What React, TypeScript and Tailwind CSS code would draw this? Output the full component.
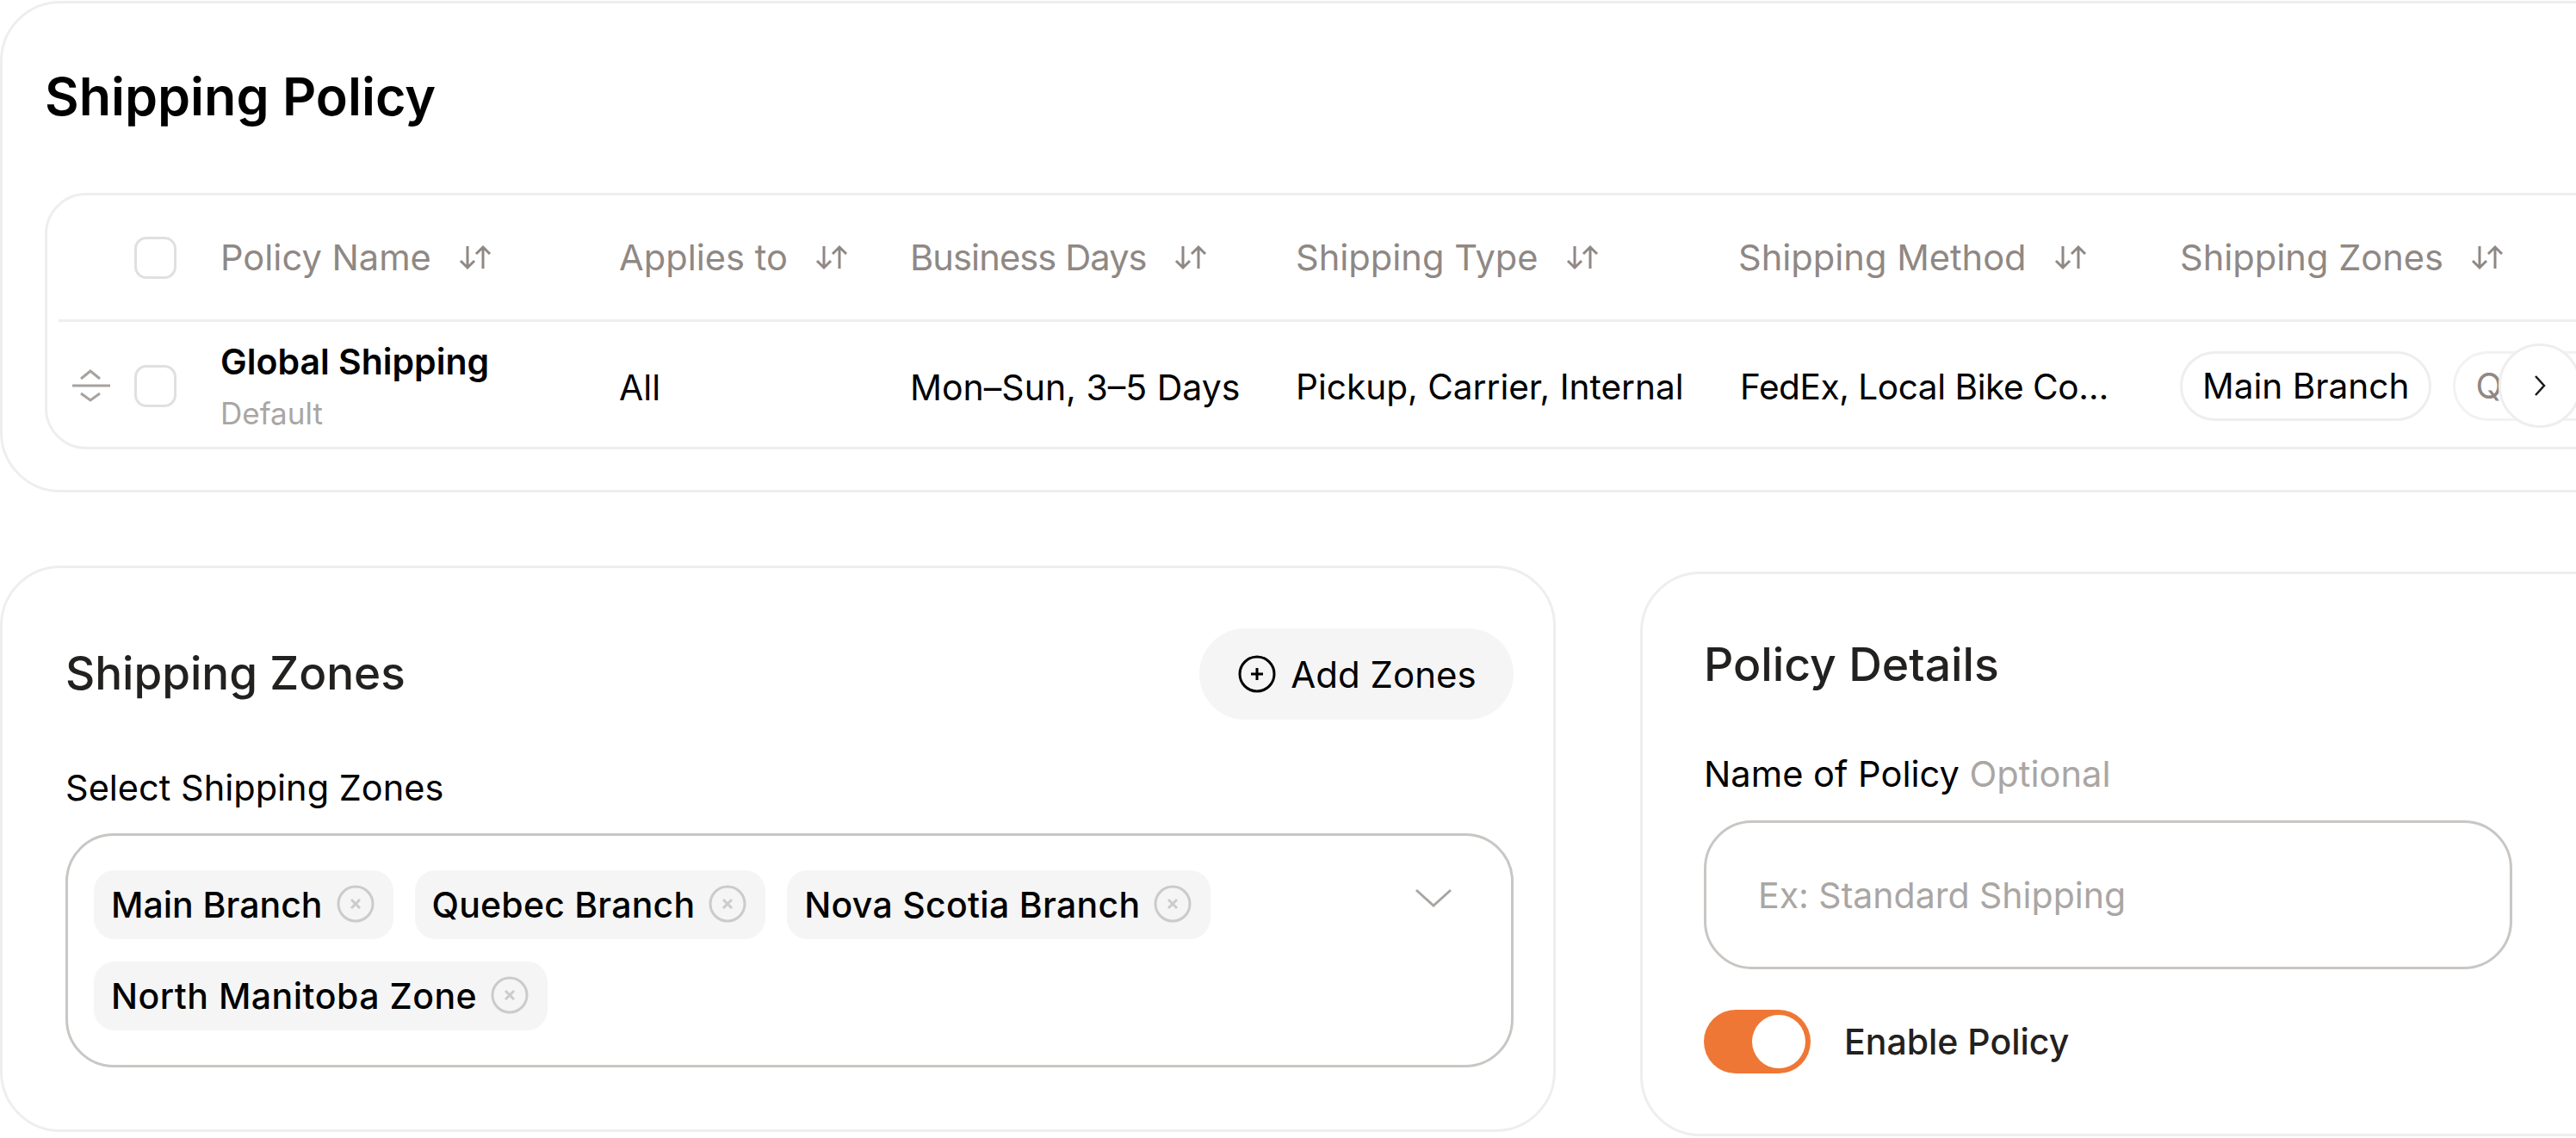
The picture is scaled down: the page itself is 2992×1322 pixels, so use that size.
const grid = "grid grid-cols-[101px_100px_463px_338px_448px_514px_513px_600px] items-center";

function Sort() {
  return (
    <svg width="38" height="30" viewBox="0 0 38 30" fill="none" stroke="#8f8884" strokeWidth="3" className="shrink-0">
      <path d="M10 2v25M2 19l8 8 8-8" />
      <path d="M28 28V3M20 11l8-8 8 8" />
    </svg>
  );
}

function Check() {
  return <div className="w-[49px] h-[49px] rounded-[14px] border-[3px] border-[#e1e0df] bg-white" />;
}

function Head({ label, extra }: { label: string; extra?: string }) {
  return (
    <div className="flex items-center gap-[32px] text-[41.6px] text-[#8f8884] whitespace-nowrap">
      <span className={extra}>{label}</span>
      <Sort />
    </div>
  );
}

function Chip({ label, extra }: { label: string; extra?: string }) {
  return (
    <div className="h-[80px] rounded-[24px] bg-[#f5f5f5] flex items-center pl-[20px] pr-[22px] gap-[16px] text-[41px] font-[550] text-black whitespace-nowrap">
      <span className={`pt-[2px] ${extra ?? ""}`}>{label}</span>
      <svg width="44" height="44" viewBox="0 0 44 44" fill="none" stroke="#cdcbc9" strokeWidth="3" className="shrink-0 -mt-[3px]">
        <circle cx="22" cy="22" r="20" />
        <path d="M17 17l10 10M27 17l-10 10" />
      </svg>
    </div>
  );
}

export default function App() {
  return (
    <div className="w-[2992px] h-[1322px] overflow-hidden bg-white font-[Inter,sans-serif]">
      <section className="w-[3200px] h-[571px] mt-[1px] border-[3px] border-[#eeeeee] rounded-[70px] pl-[49px] pt-[68px] relative">
        <h1 className="text-[61px] leading-[80px] font-semibold text-black">Shipping Policy</h1>
        <div className="w-[3100px] h-[298px] mt-[72px] border-[3px] border-[#eeeeee] rounded-[48px]">
          <div className={`${grid} h-[144px]`}>
            <div />
            <Check />
            <Head label="Policy Name" />
            <Head label="Applies to" />
            <Head label="Business Days" extra="tracking-[-0.9px]" />
            <Head label="Shipping Type" />
            <Head label="Shipping Method" />
            <Head label="Shipping Zones" />
          </div>
          <div className="ml-[13px] h-[3px] bg-[#eeeeee]" />
          <div className={`${grid} h-[148px] text-[41px] text-black whitespace-nowrap`}>
            <svg width="44" height="38" viewBox="0 0 44 38" fill="none" stroke="#a8a29e" strokeWidth="3" className="ml-[29px]">
              <path d="M10 11l11-9 11 9M0 19h44" />
              <path d="M10 28l11 8 11-8" />
            </svg>
            <Check />
            <div>
              <div className="text-[41px] leading-[50px] font-[560]">Global Shipping</div>
              <div className="text-[35px] leading-[42px] mt-[14px] text-[#aaa6a3]">Default</div>
            </div>
            <div className="pt-[5px]">All</div>
            <div className="pt-[5px]">Mon–Sun, 3–5 Days</div>
            <div className="pt-[5px] text-[40.6px]">Pickup, Carrier, Internal</div>
            <div className="pl-[2px] pt-[5px] text-[40.6px] tracking-[-0.45px]">FedEx, Local Bike Co…</div>
            <div className="flex items-center gap-[25px] text-[40.6px]">
              <div className="h-[81px] px-[23px] rounded-full border-[3px] border-[#eeeeee] flex items-center pt-[3px]">Main Branch</div>
              <div className="h-[81px] px-[23px] rounded-full border-[3px] border-[#f2f2f2] flex items-center pt-[3px] text-[#8f8884]">Quebec</div>
            </div>
          </div>
        </div>
        <button className="absolute left-[2899px] top-[395px] w-[96px] h-[98px] rounded-full bg-white border-[3px] border-[#eeeeee] flex items-center justify-center">
          <svg width="14" height="26" viewBox="0 0 14 26" fill="none" stroke="#1a1a1a" strokeWidth="2.5">
            <path d="M2 2l10 11L2 24" />
          </svg>
        </button>
      </section>

      <div className="flex items-start gap-[98px] mt-[85px]">
        <section className="w-[1807px] h-[658px] shrink-0 border-[3px] border-[#eeeeee] rounded-[70px] pl-[73px] pr-[46px] pt-[70px]">
          <div className="flex items-center justify-between h-[106px]">
            <h2 className="text-[53px] font-[550] text-[#232120]">Shipping Zones</h2>
            <button className="h-[106px] w-[365px] rounded-full bg-[#f5f5f5] flex items-center justify-center gap-[17px] pl-[2px] text-[42px] text-black">
              <svg width="44" height="44" viewBox="0 0 44 44" fill="none" stroke="#000" strokeWidth="3">
                <circle cx="22" cy="22" r="20" />
                <path d="M22 15v14M15 22h14" />
              </svg>
              <span>Add Zones</span>
            </button>
          </div>
          <div className="text-[41.5px] leading-[50px] text-black mt-[54px]">Select Shipping Zones</div>
          <div className="h-[272px] mt-[28px] border-[3px] border-[#c9c6c3] rounded-[56px] pl-[30px] pt-[40px] flex items-start">
            <div className="flex flex-wrap gap-x-[25px] gap-y-[26px] w-[1440px]">
              <Chip label="Main Branch" />
              <Chip label="Quebec Branch" extra="tracking-[0.2px]" />
              <Chip label="Nova Scotia Branch" extra="tracking-[0.3px]" />
              <Chip label="North Manitoba Zone" extra="tracking-[0.5px]" />
            </div>
            <svg width="44" height="22" viewBox="0 0 44 22" fill="none" stroke="#a8a5a3" strokeWidth="3" className="ml-[94px] mt-[21px] shrink-0">
              <path d="M2 2l20 18L42 2" />
            </svg>
          </div>
        </section>

        <section className="w-[1300px] h-[656px] shrink-0 mt-[7px] border-[3px] border-[#eeeeee] rounded-[70px] pl-[71px] pt-[70px]">
          <h2 className="text-[53.5px] leading-[70px] font-[550] text-[#232120]">Policy Details</h2>
          <div className="text-[41.6px] leading-[50px] mt-[67px] text-black">
            Name of Policy <span className="text-[#aaa6a3]">Optional</span>
          </div>
          <input
            readOnly
            placeholder="Ex: Standard Shipping"
            className="block w-[939px] h-[173px] mt-[29px] border-[3px] border-[#c9c6c3] rounded-[56px] px-[60px] text-[41px] placeholder:text-[#aaa6a3] outline-none"
          />
          <div className="flex items-center mt-[47px] gap-[39px]">
            <div className="w-[124px] h-[74px] rounded-full bg-[#ef7735] flex items-center justify-end pr-[6px]">
              <div className="w-[62px] h-[62px] rounded-full bg-white" />
            </div>
            <span className="text-[41px] font-[550] text-[#232120] pt-[2px]">Enable Policy</span>
          </div>
        </section>
      </div>
    </div>
  );
}
